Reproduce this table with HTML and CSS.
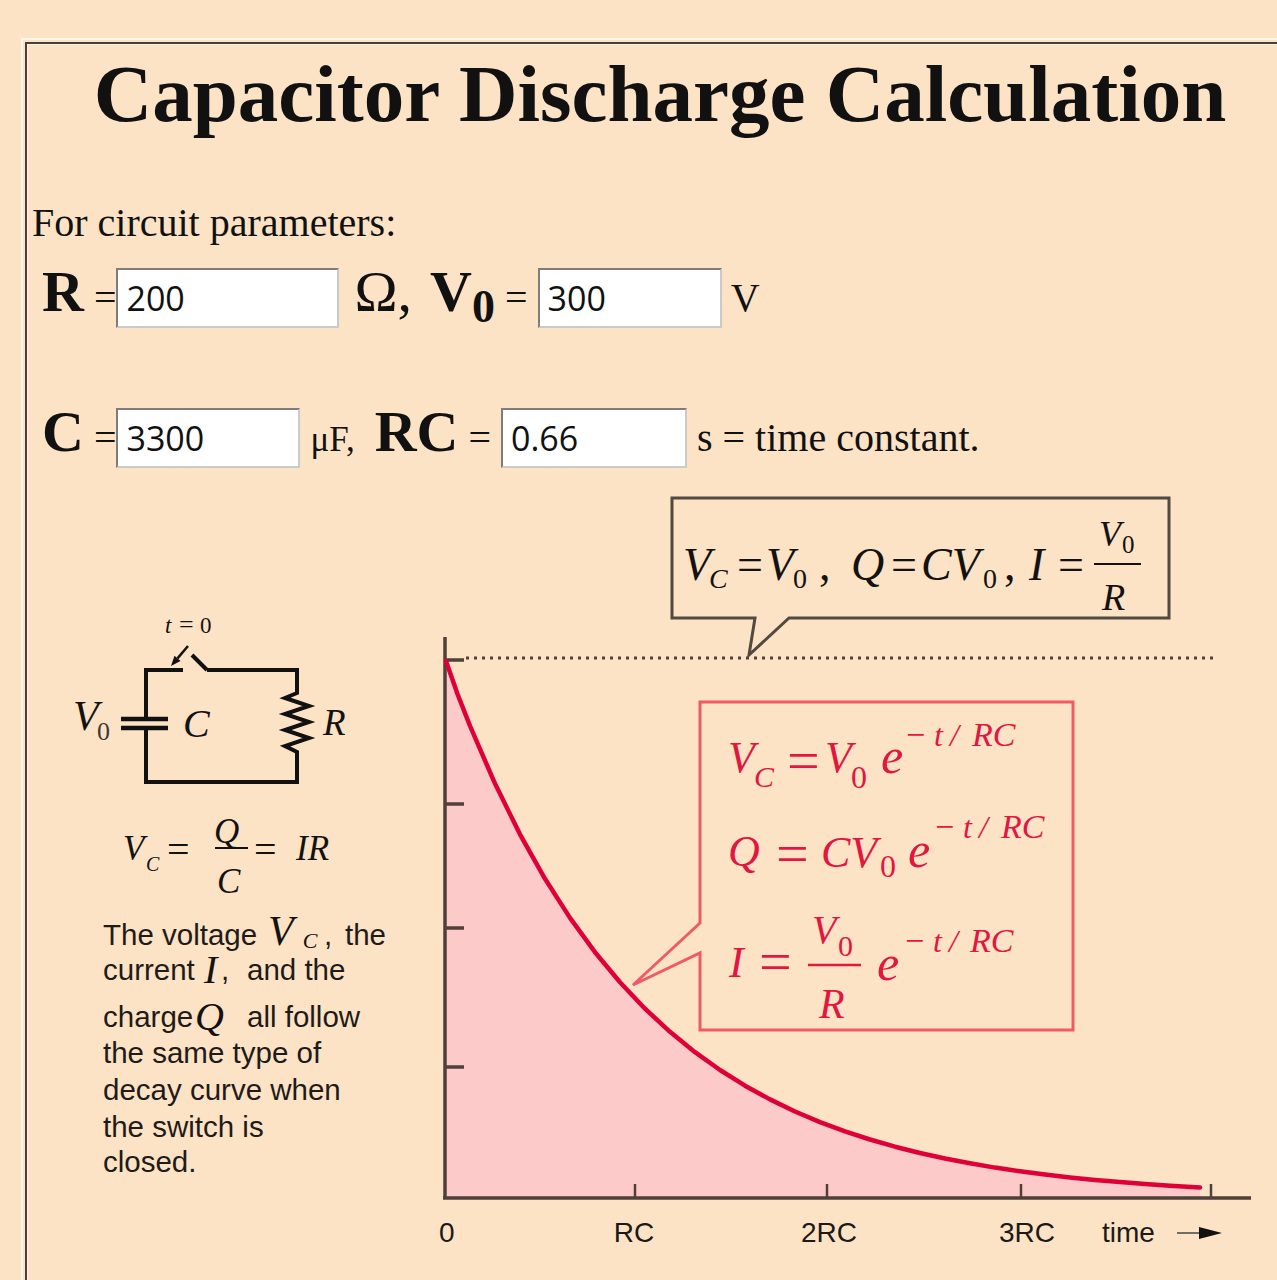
FILE: index.html
```html
<!DOCTYPE html>
<html lang="en">
<head>
<meta charset="utf-8">
<title>Capacitor Discharge Calculation</title>
<link rel="stylesheet" href="styles.css">
</head>
<body>
<div class="frame">
  <div class="cell">
    <h1 class="title">Capacitor Discharge Calculation</h1>
    <p class="lead">For circuit parameters:</p>
    <div class="row row1"><b class="sym">R</b> =<input class="num w-wide" type="text" value="200"> <span class="big">Ω,</span> <b class="sym sym-v">V<span class="sub">0</span></b> = <input class="num w-mid" type="text" value="300"> V</div>
    <div class="row row2"><b class="sym">C</b> =<input class="num w-mid" type="text" value="3300"> <span class="unit">μF,</span> <b class="sym sym-rc">RC</b> = <input class="num w-rc" type="text" value="0.66"> s = time constant.</div>

    <svg class="fig" width="1250" height="790" viewBox="27 490 1250 790" xmlns="http://www.w3.org/2000/svg">
      <!-- decay graph -->
      <polygon class="area" points="445,660 457.5,694 470,725.9 495,783.6 520,834.3 545,878.8 570,917.9 595,952.2 620,982.3 645,1008.7 670,1031.8 695,1052.2 720,1070 745,1085.7 770,1099.4 795,1111.5 820,1122.1 845,1131.4 870,1139.5 895,1146.7 920,1153 945,1158.5 970,1163.3 995,1167.6 1020,1171.3 1045,1174.6 1070,1177.4 1095,1179.9 1120,1182.1 1145,1184.1 1170,1185.8 1200,1187.6 1200,1197 445,1197"/>
      <path class="dots" d="M466,658 H1216"/>
      <path class="axis" d="M445,637 V1199 M443,1198 H1251"/>
      <path class="tick" d="M445,660 H464 M445,804 H464 M445,928 H464 M445,1067 H464"/>
      <path class="xtick" d="M635,1184 V1198 M827,1184 V1198 M1021,1184 V1198 M1211,1184 V1198"/>
      <polyline class="curve" points="446,661 457.5,694 470,725.9 495,783.6 520,834.3 545,878.8 570,917.9 595,952.2 620,982.3 645,1008.7 670,1031.8 695,1052.2 720,1070 745,1085.7 770,1099.4 795,1111.5 820,1122.1 845,1131.4 870,1139.5 895,1146.7 920,1153 945,1158.5 970,1163.3 995,1167.6 1020,1171.3 1045,1174.6 1070,1177.4 1095,1179.9 1120,1182.1 1145,1184.1 1170,1185.8 1200,1187.6"/>

      <text class="lbl" x="439" y="1242">0</text>
      <text class="lbl" x="634" y="1242" text-anchor="middle">RC</text>
      <text class="lbl" x="829" y="1242" text-anchor="middle">2RC</text>
      <text class="lbl" x="1027" y="1242" text-anchor="middle">3RC</text>
      <text class="lbl" x="1102" y="1242">time</text>
      <path class="shaft" d="M1177,1233 H1201"/>
      <polygon class="head" points="1199,1227 1222,1233 1199,1239"/>

      <!-- initial-value callout -->
      <path class="callout" d="M755,618 L749,655 L789,618 H1169 V498 H672 V618 Z"/>
      <g class="ink">
        <text class="mi" x="683" y="580" font-size="46">V</text>
        <text class="mi" x="709" y="588" font-size="28">C</text>
        <text class="mr" x="737" y="580" font-size="46">=</text>
        <text class="mi" x="766" y="580" font-size="46">V</text>
        <text class="mr" x="793" y="588" font-size="28">0</text>
        <text class="mr" x="819" y="580" font-size="46">,</text>
        <text class="mi" x="851" y="580" font-size="46">Q</text>
        <text class="mr" x="891" y="580" font-size="46">=</text>
        <text class="mi" x="921" y="580" font-size="46">CV</text>
        <text class="mr" x="983" y="588" font-size="28">0</text>
        <text class="mr" x="1004" y="580" font-size="46">,</text>
        <text class="mi" x="1029" y="580" font-size="46">I</text>
        <text class="mr" x="1058" y="580" font-size="46">=</text>
        <text class="mi" x="1099" y="546" font-size="36">V</text>
        <text class="mr" x="1122" y="553" font-size="25">0</text>
        <text class="mi" x="1102" y="610" font-size="38">R</text>
      </g>
      <line class="bar" x1="1094" y1="564" x2="1141" y2="564"/>

      <!-- decay formulas callout -->
      <path class="callout-red" d="M700,923 L633,985 L700,953 V1030 H1073 V702 H700 Z"/>
      <g class="red">
        <text class="mi" x="728" y="772" font-size="44">V</text>
        <text class="mi" x="754" y="787" font-size="30">C</text>
        <text class="mr" x="787" y="780" font-size="58">=</text>
        <text class="mi" x="825" y="772" font-size="44">V</text>
        <text class="mr" x="851" y="788" font-size="32">0</text>
        <text class="mi" x="881" y="773" font-size="50">e</text>
        <text class="mr" x="906" y="746" font-size="34">−</text>
        <text class="mi" x="934" y="746" font-size="32">t</text>
        <text class="mi" x="950" y="746" font-size="32">/</text>
        <text class="mi" x="972" y="746" font-size="34">RC</text>

        <text class="mi" x="728" y="866" font-size="44">Q</text>
        <text class="mr" x="776" y="873" font-size="58">=</text>
        <text class="mi" x="821" y="867" font-size="44">CV</text>
        <text class="mr" x="880" y="877" font-size="32">0</text>
        <text class="mi" x="908" y="867" font-size="50">e</text>
        <text class="mr" x="935" y="838" font-size="34">−</text>
        <text class="mi" x="963" y="838" font-size="32">t</text>
        <text class="mi" x="979" y="838" font-size="32">/</text>
        <text class="mi" x="1001" y="838" font-size="34">RC</text>

        <text class="mi" x="729" y="977" font-size="44">I</text>
        <text class="mr" x="759" y="981" font-size="58">=</text>
        <text class="mi" x="812" y="943" font-size="40">V</text>
        <text class="mr" x="838" y="956" font-size="30">0</text>
        <text class="mi" x="819" y="1018" font-size="42">R</text>
        <text class="mi" x="877" y="980" font-size="50">e</text>
        <text class="mr" x="905" y="952" font-size="34">−</text>
        <text class="mi" x="933" y="952" font-size="32">t</text>
        <text class="mi" x="949" y="952" font-size="32">/</text>
        <text class="mi" x="970" y="952" font-size="34">RC</text>
      </g>
      <line class="bar-red" x1="808" y1="965" x2="861" y2="965"/>

      <!-- circuit -->
      <path class="wire" d="M183,670 H146 V719 M146,728 V782 H297 V752 L285,746 L309,738 L285,730 L309,722 L285,714 L309,706 L285,698 L297,693 V670 H207"/>
      <path class="wire" d="M207,670 L192,655"/>
      <path class="plate" d="M121,719 H168 M121,728 H168"/>
      <path class="pin" d="M188,646 L177.5,658.4"/>
      <polygon class="pin-head" points="171,666 180.5,661 174.5,655.8"/>
      <g class="ink">
        <text class="mi" x="165" y="633" font-size="23">t</text>
        <text class="mr" x="179" y="633" font-size="26">=</text>
        <text class="mr" x="200" y="633" font-size="23">0</text>
        <text class="mi" x="73" y="730" font-size="42">V</text>
        <text class="mr grey" x="97" y="740" font-size="26">0</text>
        <text class="mi" x="183" y="737" font-size="40">C</text>
        <text class="mi" x="323" y="735" font-size="37">R</text>

        <text class="mi" x="123" y="860" font-size="35">V</text>
        <text class="mi" x="146" y="871" font-size="20">C</text>
        <text class="mr" x="167" y="863" font-size="40">=</text>
        <text class="mi" x="214" y="843" font-size="35">Q</text>
        <text class="mi" x="217" y="893" font-size="35">C</text>
        <text class="mr" x="254" y="863" font-size="40">=</text>
        <text class="mi" x="296" y="860" font-size="35">IR</text>
      </g>
      <line class="bar" x1="215" y1="848" x2="248" y2="848"/>

      <!-- explanation -->
      <g class="para">
        <text x="103" y="945">The voltage</text>
        <text class="mi" x="268" y="945" font-size="42">V<tspan dx="9" dy="3" font-size="22">C</tspan></text>
        <text x="324" y="945">,</text>
        <text x="345" y="945">the</text>
        <text x="103" y="980">current</text>
        <text class="mi" x="204" y="983" font-size="40">I</text>
        <text x="221" y="980">,</text>
        <text x="247" y="980">and the</text>
        <text x="103" y="1027">charge</text>
        <text class="mi" x="195" y="1030" font-size="40">Q</text>
        <text x="247" y="1027">all follow</text>
        <text x="103" y="1063">the same type of</text>
        <text x="103" y="1100">decay curve when</text>
        <text x="103" y="1137">the switch is</text>
        <text x="103" y="1172">closed.</text>
      </g>
    </svg>
  </div>
</div>
</body>
</html>
```

FILE: styles.css
```css
html, body {
  margin: 0;
  padding: 0;
  overflow: hidden;
  background: #fde3c6;
}

body {
  width: 1277px;
  height: 1280px;
  font-family: "Liberation Serif", "Times New Roman", serif;
  color: #111;
}

.frame {
  margin: 38px 0 0 21px;
  border-top: 2px solid #fff6ec;
  border-left: 2px solid #fff6ec;
  padding: 2px 0 0 2px;
}

.cell {
  width: 1266px;
  padding-top: 9px;
  border-top: 2px solid #4b3f35;
  border-left: 2px solid #4b3f35;
  box-shadow: inset 1px 1px 0 #fff4e6;
}

.title {
  margin: 0;
  font-size: 81px;
  line-height: 82px;
  font-weight: bold;
  text-align: center;
}

.lead {
  margin: 68px 0 0;
  padding-left: 5px;
  font-size: 40px;
  line-height: 40px;
}

.row {
  height: 64px;
  padding-left: 15px;
  font-size: 40px;
  line-height: 40px;
  white-space: nowrap;
}

.row1 { margin-top: 20px; }
.row2 { margin-top: 76px; }

.sym {
  font-size: 58px;
  line-height: 58px;
  font-weight: bold;
}

.sym-v { margin-left: 8px; }
.sym-rc { margin-left: 10px; }

.sub {
  font-size: 46px;
  line-height: 46px;
  vertical-align: -11px;
}

.big {
  margin-left: 5px;
  font-size: 58px;
  line-height: 58px;
}

.unit { font-size: 35px; }

.num {
  box-sizing: border-box;
  height: 60px;
  margin: 0;
  padding: 0 0 0 8px;
  font-family: "Open Sans", "DejaVu Sans", sans-serif;
  font-size: 34px;
  color: #111;
  background: #fff;
  border: 2px solid;
  border-color: #7d7d7d #cacaca #cacaca #7d7d7d;
  outline: none;
  vertical-align: baseline;
}

.w-wide { width: 223px; }
.w-mid { width: 184px; }
.w-rc { width: 186px; }

.fig {
  display: block;
  margin-top: 23px;
}

.fig text { font-family: "Liberation Serif", "Times New Roman", serif; }
.fig .mi { font-style: italic; }
.ink { fill: #141210; }
.grey { fill: #3c3a38; }
.red { fill: #e2163f; }

.para {
  font-size: 29.5px;
  fill: #1f1b18;
}
.fig .para text {
  font-family: "Liberation Sans", Arial, sans-serif;
}
.fig .para text.mi {
  font-family: "Liberation Serif", "Times New Roman", serif;
  fill: #141210;
}

.fig .lbl {
  font-family: "Liberation Sans", Arial, sans-serif;
  font-size: 28px;
  fill: #1c1a18;
}

.area { fill: #fccbc9; }
.curve { fill: none; stroke: #de0037; stroke-width: 4.5; stroke-linejoin: round; stroke-linecap: round; }
.axis { fill: none; stroke: #4f4139; stroke-width: 3.5; }
.tick { fill: none; stroke: #4f4139; stroke-width: 3.5; }
.xtick { fill: none; stroke: #4f4139; stroke-width: 2.5; }
.dots { fill: none; stroke: #4f4139; stroke-width: 3; stroke-dasharray: 3 5; }
.shaft { stroke: #444; stroke-width: 1.5; }
.head { fill: #111; }

.callout { fill: none; stroke: #524940; stroke-width: 3; stroke-linejoin: miter; }
.callout-red { fill: none; stroke: #ef5a68; stroke-width: 3; stroke-linejoin: miter; }
.bar { stroke: #141210; stroke-width: 2; }
.bar-red { stroke: #e2163f; stroke-width: 2.5; }

.wire { fill: none; stroke: #111; stroke-width: 4; stroke-linejoin: miter; }
.plate { fill: none; stroke: #111; stroke-width: 4.5; }
.pin { stroke: #111; stroke-width: 2.5; }
.pin-head { fill: #111; }
```
